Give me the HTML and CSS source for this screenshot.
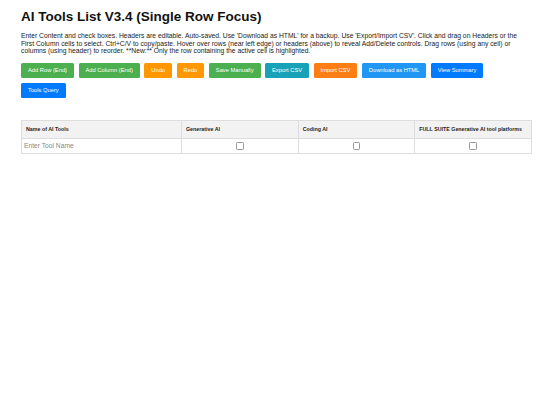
FILE: index.html
```html
<!DOCTYPE html>
<html lang="en">
<head>
<meta charset="utf-8">
<title>AI Tools List V3.4</title>
<link rel="stylesheet" href="styles.css">
</head>
<body>
<div class="page">
  <h1 class="title">AI Tools List V3.4 (Single Row Focus)</h1>
  <p class="intro">Enter Content and check boxes. Headers are editable. Auto-saved. Use 'Download as HTML' for a backup. Use 'Export/Import CSV'. Click and drag on Headers or the First Column cells to select. Ctrl+C/V to copy/paste. Hover over rows (near left edge) or headers (above) to reveal Add/Delete controls. Drag rows (using any cell) or columns (using header) to reorder. **New:** Only the row containing the active cell is highlighted.</p>
  <div class="toolbar">
    <button class="btn green">Add Row (End)</button>
    <button class="btn green">Add Column (End)</button>
    <button class="btn amber">Undo</button>
    <button class="btn amber">Redo</button>
    <button class="btn green">Save Manually</button>
    <button class="btn teal">Export CSV</button>
    <button class="btn orange">Import CSV</button>
    <button class="btn sky">Download as HTML</button>
    <button class="btn blue">View Summary</button>
    <button class="btn blue">Tools Query</button>
  </div>
  <table class="grid">
    <thead>
      <tr>
        <th class="col-name">Name of AI Tools</th>
        <th>Generative AI</th>
        <th>Coding AI</th>
        <th>FULL SUITE Generative AI tool platforms</th>
      </tr>
    </thead>
    <tbody>
      <tr>
        <td class="name-cell"><span class="placeholder">Enter Tool Name</span></td>
        <td class="check-cell"><span class="box"></span></td>
        <td class="check-cell"><span class="box"></span></td>
        <td class="check-cell"><span class="box"></span></td>
      </tr>
    </tbody>
  </table>
</div>
</body>
</html>
```

FILE: styles.css
```css
html, body {
  margin: 0;
  padding: 0;
  background: #ffffff;
}
body {
  font-family: "Liberation Sans", Arial, sans-serif;
  color: #222;
}
.page {
  padding: 8.7px 8px 0 21px;
}
.title {
  margin: 0;
  font-size: 13.5px;
  line-height: 16px;
  font-weight: bold;
  color: #111;
}
.intro {
  margin: 7.3px 0 0 0;
  padding-right: 14px;
  font-size: 6.75px;
  line-height: 7.7px;
  color: #222;
}
.toolbar {
  display: flex;
  flex-wrap: wrap;
  gap: 4.4px 4.5px;
  margin-top: 8.4px;
  padding-right: 30px;
}
.btn {
  font-family: "Liberation Sans", Arial, sans-serif;
  font-size: 5.75px;
  height: 15px;
  padding: 0 7px;
  border: none;
  border-radius: 1.5px;
  color: #fff;
  cursor: pointer;
  line-height: 15px;
}
.green { background: #4caf50; }
.amber { background: #ff9800; }
.teal { background: #17a2b8; }
.orange { background: #fd7e14; }
.sky { background: #2196f3; }
.blue { background: #007bff; }
.grid {
  margin-top: 22.3px;
  width: 511px;
  border-collapse: collapse;
  table-layout: fixed;
}
.grid th, .grid td {
  border: 0.6px solid #dddddd;
}
.grid th {
  background: #f2f2f2;
  font-size: 5.3px;
  line-height: 7px;
  font-weight: bold;
  text-align: left;
  height: 16.5px;
  padding: 0 4px;
  color: #222;
}
.col-name {
  width: 151px;
}
.grid td {
  height: 14.5px;
  padding: 0 2px;
  font-size: 6.7px;
  line-height: 8px;
}
.placeholder {
  color: #888;
}
.check-cell {
  text-align: center;
}
.box {
  display: inline-block;
  width: 5.6px;
  height: 5.6px;
  border: 0.7px solid #999;
  border-radius: 1.3px;
  vertical-align: middle;
  background: #fff;
}
```
